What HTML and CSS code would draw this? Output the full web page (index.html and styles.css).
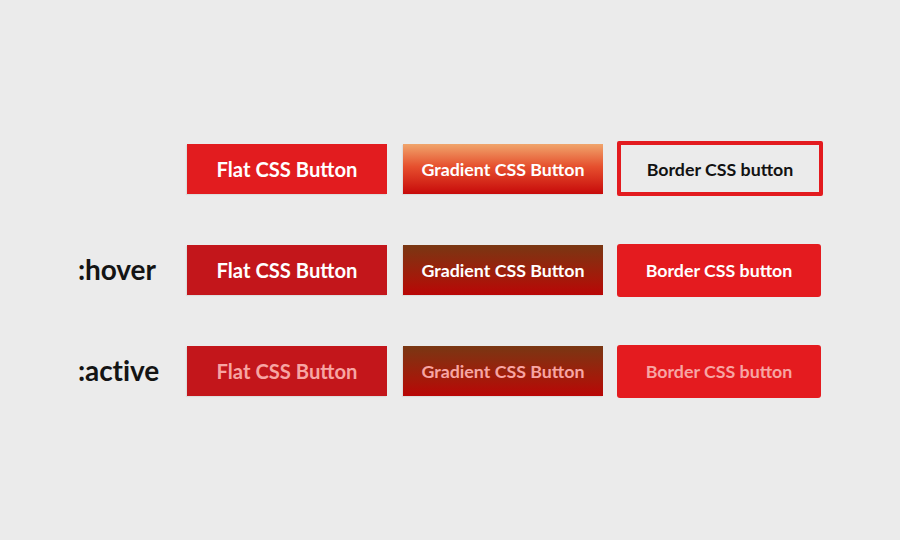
FILE: index.html
```html
<!DOCTYPE html>
<html>
<head>
<meta charset="utf-8">
<link rel="stylesheet" href="styles.css">
</head>
<body>
<main class="demo">
  <div class="row">
    <div class="label"></div>
    <div class="cell"><a class="btn flat">Flat CSS Button</a></div>
    <div class="cell"><a class="btn grad">Gradient CSS Button</a></div>
    <div class="cell"><a class="btn border">Border CSS button</a></div>
  </div>
  <div class="row">
    <div class="label">:hover</div>
    <div class="cell"><a class="btn flat hover">Flat CSS Button</a></div>
    <div class="cell"><a class="btn grad hover">Gradient CSS Button</a></div>
    <div class="cell"><a class="btn border hover">Border CSS button</a></div>
  </div>
  <div class="row">
    <div class="label">:active</div>
    <div class="cell"><a class="btn flat active">Flat CSS Button</a></div>
    <div class="cell"><a class="btn grad active">Gradient CSS Button</a></div>
    <div class="cell"><a class="btn border active">Border CSS button</a></div>
  </div>
</main>
</body>
</html>
```
FILE: styles.css
```css
html, body {
  margin: 0;
  padding: 0;
  background: #ebebeb;
  width: 900px;
  height: 540px;
  overflow: hidden;
}
.demo {
  padding-top: 141px;
  padding-left: 78px;
  display: flex;
  flex-direction: column;
  gap: 46px;
  font-family: "Lato", "Open Sans", sans-serif;
}
.row {
  display: grid;
  grid-template-columns: 109px 216px 214px 206px;
  align-items: center;
  height: 55px;
}
.label {
  font-size: 28px;
  font-weight: 700;
  color: #141414;
  letter-spacing: -0.1px;
  padding-bottom: 2px;
}
.cell {
  display: flex;
  align-items: center;
}
.btn {
  display: flex;
  align-items: center;
  justify-content: center;
  box-sizing: border-box;
  width: 200px;
  height: 50px;
  color: #fff;
  font-weight: 700;
  text-decoration: none;
  box-shadow: -1px 1px 1px rgba(0,0,0,0.06);
}
.flat {
  background: #e21c1f;
  font-size: 20.2px;
}
.flat.hover, .flat.active { background: #c3161b; }
.grad {
  background: linear-gradient(#f0a56c, #e6502e 45%, #c70a0a);
  font-size: 17.8px;
}
.grad.hover, .grad.active { background: linear-gradient(#793713, #a31a0a 65%, #b90606); }
.border {
  width: 206px;
  height: 55px;
  border: 4px solid #e31b1f;
  color: #121212;
  font-size: 17.8px;
  background: transparent;
  border-radius: 2px;
  box-shadow: none;
}
.border.hover, .border.active {
  width: 204px;
  height: 53px;
  border: 0;
  border-radius: 3px;
  background: #e41b1f;
  color: #fff;
  margin-top: 1px;
}
.active { color: #f7a5a3; }
.border.active { color: #f7a5a3; }
```
